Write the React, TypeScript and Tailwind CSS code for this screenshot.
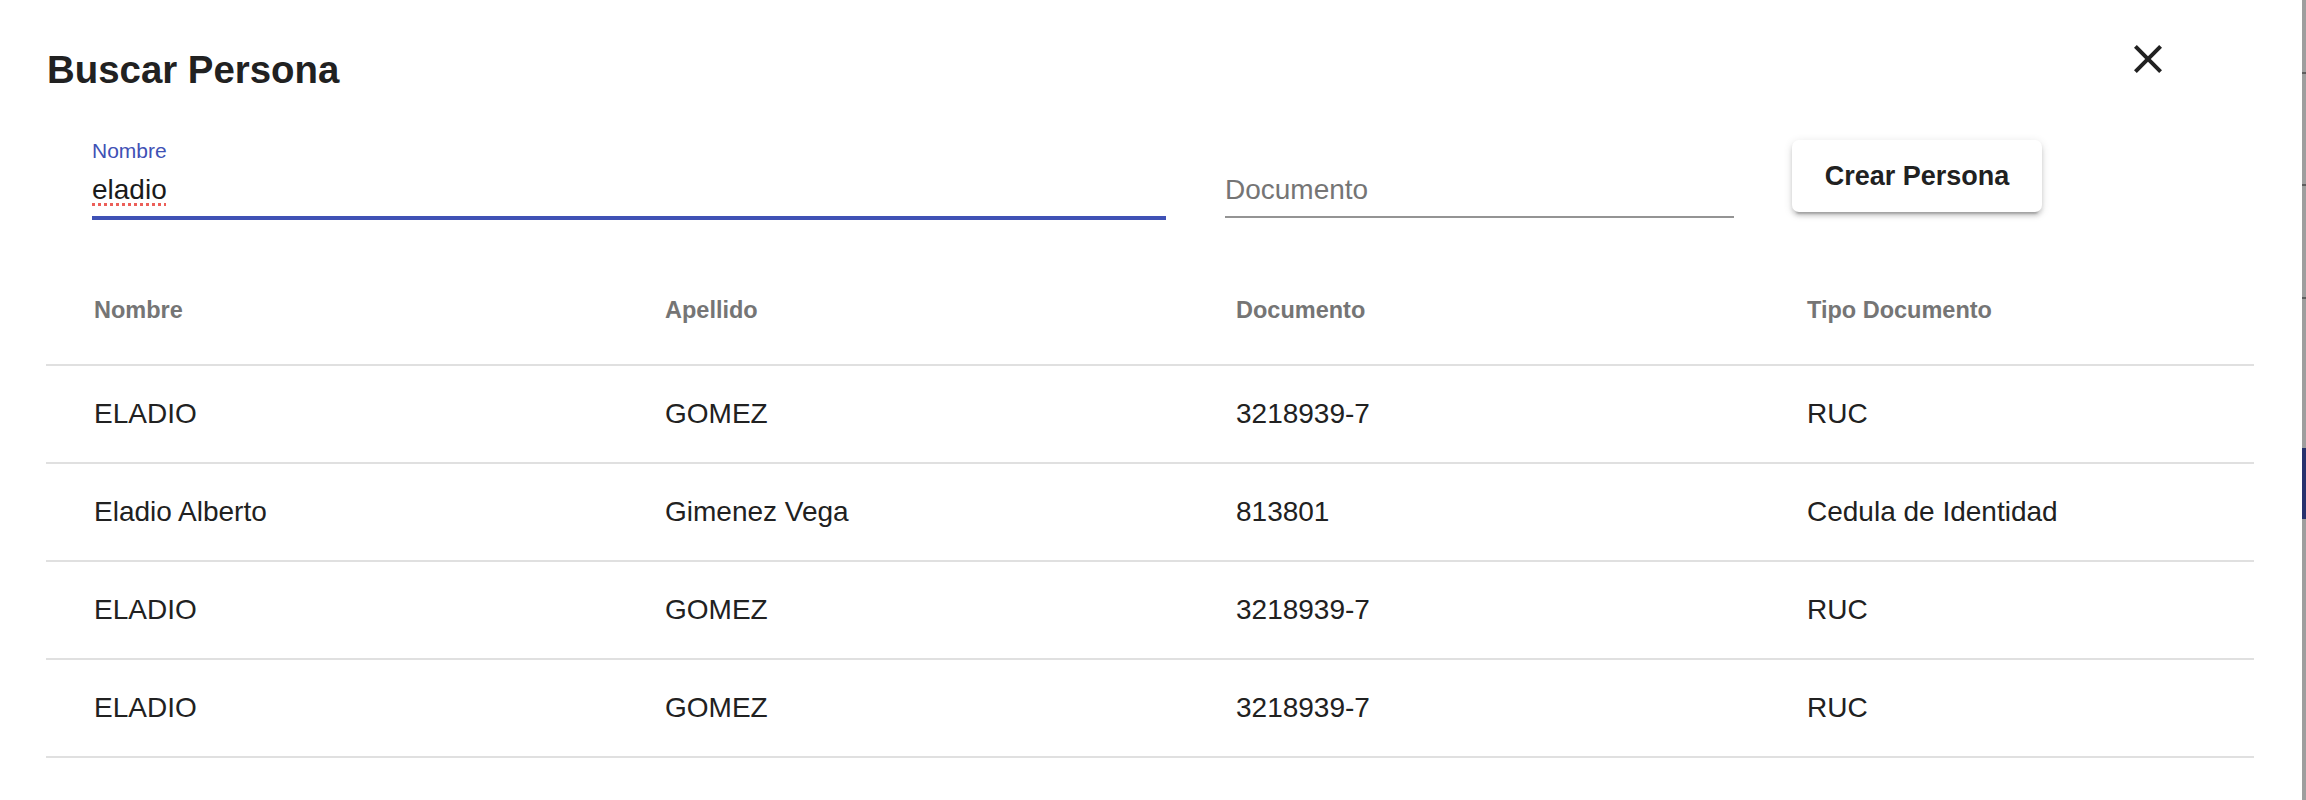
import React from "react";

const rows = [
  { nombre: "ELADIO", apellido: "GOMEZ", documento: "3218939-7", tipo: "RUC" },
  { nombre: "Eladio Alberto", apellido: "Gimenez Vega", documento: "813801", tipo: "Cedula de Identidad" },
  { nombre: "ELADIO", apellido: "GOMEZ", documento: "3218939-7", tipo: "RUC" },
  { nombre: "ELADIO", apellido: "GOMEZ", documento: "3218939-7", tipo: "RUC" },
];

function CloseIcon() {
  return (
    <svg viewBox="0 0 24 24" className="w-[48px] h-[48px]" fill="#212121">
      <path d="M19 6.41 17.59 5 12 10.59 6.41 5 5 6.41 10.59 12 5 17.59 6.41 19 12 13.41 17.59 19 19 17.59 13.41 12z" />
    </svg>
  );
}

export default function App() {
  return (
    <div className="flex w-[2306px] h-[800px] bg-white font-['Liberation_Sans',Arial,sans-serif] text-[#212121] overflow-hidden">
      <div className="flex-1 flex flex-col bg-white">
        {/* Title row */}
        <div className="flex items-start justify-between h-[94px] pl-[47px] pr-[130px]">
          <h2 className="mt-[46px] h-[48px] leading-[48px] text-[38.4px] font-bold text-[#212121]">Buscar Persona</h2>
          <button className="mt-[35px] w-[48px] h-[48px] flex items-center justify-center">
            <CloseIcon />
          </button>
        </div>

        {/* Form row */}
        <div className="flex items-start pl-[92px]">
          <div className="w-[1074px] mt-[45px] flex flex-col">
            <label className="h-[24px] leading-[24px] text-[21px] text-[#3f51b5]">Nombre</label>
            <div className="mt-[9px] h-[36px] leading-[36px] text-[28px] text-[#1a1a1a]">
              <span className="underline decoration-dotted decoration-[#ec5f59] decoration-[3px] underline-offset-[4px]">eladio</span>
            </div>
            <div className="mt-[8px] h-[4px] bg-[#3f51b5]" />
          </div>

          <div className="w-[509px] ml-[59px] mt-[45px] flex flex-col">
            <div className="h-[33px]" />
            <div className="h-[36px] leading-[36px] text-[28px] text-[#757575]">Documento</div>
            <div className="mt-[8px] h-[2px] bg-[#949494]" />
          </div>

          <button className="ml-[58px] mt-[46px] w-[250px] h-[72px] rounded-[7px] bg-white flex items-center justify-center text-[27px] font-bold text-[#212121] shadow-[0px_6px_2px_-4px_rgba(0,0,0,0.2),0px_4px_4px_0px_rgba(0,0,0,0.14),0px_2px_10px_0px_rgba(0,0,0,0.12)]">
            Crear Persona
          </button>
        </div>

        {/* Table */}
        <div className="ml-[46px] w-[2208px] mt-[38px] flex flex-col">
          <div className="grid grid-cols-[571px_571px_571px_1fr] h-[108px] border-b-2 border-[#e0e0e0] items-center text-[23.5px] font-bold text-[#757575]">
            <div className="pl-[48px]">Nombre</div>
            <div className="pl-[48px]">Apellido</div>
            <div className="pl-[48px]">Documento</div>
            <div className="pl-[48px]">Tipo Documento</div>
          </div>
          {rows.map((r, i) => (
            <div
              key={i}
              className="grid grid-cols-[571px_571px_571px_1fr] h-[98px] border-b-2 border-[#e0e0e0] items-center text-[28px] text-[#212121]"
            >
              <div className="pl-[48px]">{r.nombre}</div>
              <div className="pl-[48px]">{r.apellido}</div>
              <div className="pl-[48px]">{r.documento}</div>
              <div className="pl-[48px]">{r.tipo}</div>
            </div>
          ))}
        </div>
      </div>

      {/* backdrop strip on the right */}
      <div className="w-[4px] h-full flex flex-col bg-[#9e9e9e]">
        <div className="h-[72px]" />
        <div className="h-[2px] bg-[#5e5e5e]" />
        <div className="h-[110px]" />
        <div className="h-[2px] bg-[#5e5e5e]" />
        <div className="h-[111px]" />
        <div className="h-[2px] bg-[#5e5e5e]" />
        <div className="h-[149px]" />
        <div className="h-[71px] bg-[#28316c]" />
      </div>
    </div>
  );
}
